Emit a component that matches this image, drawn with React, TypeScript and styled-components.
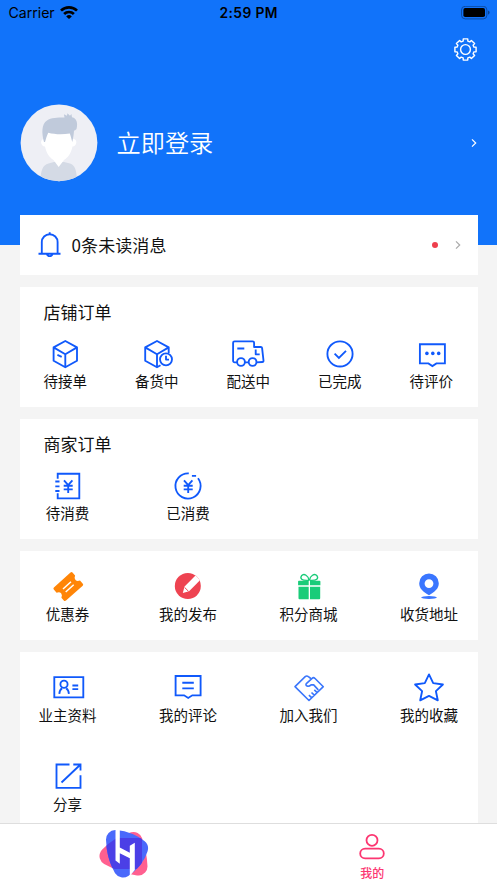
import React from "react";
import styled, { createGlobalStyle } from "styled-components";

const Global = createGlobalStyle`
  * { box-sizing: border-box; }
  html, body { margin: 0; padding: 0; }
  body { background: #f4f4f4; font-family: "Noto Sans CJK SC", sans-serif; color: #111; overflow: hidden; }
`;

const Screen = styled.div`
  width: 497px;
  height: 883px;
  display: flex;
  flex-direction: column;
  overflow: hidden;
  background: #f4f4f4;
`;

const Header = styled.header`
  flex: none;
  height: 245px;
  background: #1173fa;
`;

const StatusBar = styled.div`
  display: grid;
  grid-template-columns: 1fr auto 1fr;
  align-items: center;
  height: 26px;
  padding: 0 7px 0 8.5px;
  font-family: Inter, sans-serif;
  color: #000;
`;

const Carrier = styled.div`
  display: flex;
  align-items: center;
  gap: 5px;
  font-size: 14.2px;
  letter-spacing: -0.05px;
  line-height: 16px;
  padding-bottom: 1px;
`;

const Clock = styled.div`
  font-size: 13.8px;
  font-weight: 600;
  letter-spacing: 0.4px;
  padding-right: 1px;
`;

const BatterySlot = styled.div`
  display: flex;
  justify-content: flex-end;
`;

const Toolbar = styled.div`
  display: flex;
  justify-content: flex-end;
  height: 48px;
  padding: 11px 19px 0 0;
`;

const Profile = styled.div`
  display: flex;
  align-items: center;
  height: 78px;
  margin-top: 30px;
  padding: 0 19px 0 20px;
`;

const LoginText = styled.div`
  flex: 1;
  margin-left: 18.5px;
  padding-bottom: 2px;
  color: #fff;
  font-size: 24.2px;
  font-weight: 350;
  line-height: 36px;
`;

const Content = styled.main`
  flex: 1;
  min-height: 0;
  display: flex;
  flex-direction: column;
  gap: 12px;
  margin-top: -30px;
  padding: 0 19.5px;
  overflow: hidden;
`;

const Card = styled.section<{ $height: number }>`
  flex: none;
  height: ${(p) => p.$height}px;
  background: #fff;
`;

const MessageRow = styled(Card)`
  display: flex;
  align-items: center;
  padding: 0 15.5px 0 14px;
`;

const MessageText = styled.div`
  flex: 1;
  margin-left: 6px;
  padding-bottom: 1px;
  font-size: 17px;
  letter-spacing: 0.1px;
  line-height: 24px;
`;

const UnreadDot = styled.span`
  width: 6px;
  height: 6px;
  margin-right: 16px;
  border-radius: 50%;
  background: #ee3f4d;
`;

const CardTitle = styled.h2`
  height: 51px;
  margin: 0;
  padding: 12px 0 0 24px;
  font-size: 17px;
  font-weight: 400;
  line-height: 26px;
`;

const Entry = styled.div`
  display: flex;
  flex-direction: column;
  align-items: center;
  gap: 1px;
`;

const Grid = styled.div<{ $five?: boolean; $untitled?: boolean }>`
  display: grid;
  grid-template-columns: ${(p) => (p.$five ? "repeat(5, 1fr)" : "repeat(4, 96px)")};
  justify-content: space-between;
  row-gap: 35px;
  margin-right: 0.5px;
  padding-top: ${(p) => (p.$untitled ? 19 : 0)}px;

  ${Entry} {
    gap: ${(p) => (p.$untitled ? 2 : 1)}px;
  }
`;

const Label = styled.span`
  font-size: 14.5px;
  line-height: 20px;
  white-space: nowrap;
`;

const LineIcon = styled.svg<{ $tone?: string }>`
  display: block;
  flex: none;
  width: 32px;
  height: 32px;
  overflow: visible;
  fill: none;
  stroke: ${(p) => p.$tone ?? "#1059fb"};
  stroke-width: 1.85;
`;

const SolidIcon = styled.svg`
  display: block;
  flex: none;
  width: 32px;
  height: 32px;
  overflow: visible;
`;

const Plain = styled.svg`
  display: block;
  flex: none;
`;

const TabBar = styled.nav`
  flex: none;
  height: 60px;
  display: grid;
  grid-template-columns: 1fr 1fr;
  background: #fff;
  border-top: 1px solid #dedede;
`;

const Tab = styled.div<{ $pad: number; $inset?: number }>`
  display: flex;
  flex-direction: column;
  align-items: center;
  padding-top: ${(p) => p.$pad}px;
  padding-right: ${(p) => p.$inset ?? 0}px;
`;

const TabLabel = styled.span`
  margin-top: 4px;
  color: #fc3671;
  font-size: 12px;
  font-weight: 500;
  line-height: 16px;
`;

const Wifi = () => (
  <Plain width="18" height="14" viewBox="0 0 18 14" fill="none" stroke="#000" strokeWidth="2.7">
    <path d="M1 4.6a11.5 11.5 0 0 1 16 0M4.1 8a7 7 0 0 1 9.800 0" />
    <path d="M9 13.100 6.200 10.400a4.100 4.100 0 0 1 5.600 0Z" fill="#000" stroke="none" />
  </Plain>
);

const Battery = () => (
  <Plain width="29" height="14" viewBox="0 0 29 14">
    <rect x=".5" y=".3" width="25.400" height="12.600" rx="3.700" fill="none" stroke="#0b4ba3" />
    <rect x="2.400" y="2.100" width="21.600" height="9" rx="1.800" />
    <path d="M27.200 4.500c1.800.7 1.800 3.500 0 4.200Z" fill="#083a80" />
  </Plain>
);

const gearPoints = Array.from({ length: 8 }, (_, i) => {
  const base = (i * Math.PI) / 4;
  return [
    [-0.27, 8.4],
    [-0.21, 10.4],
    [0.21, 10.4],
    [0.27, 8.4],
  ]
    .map(([a, r]) => `${(12 + r * Math.sin(base + a)).toFixed(2)},${(12 - r * Math.cos(base + a)).toFixed(2)}`)
    .join(" ");
}).join(" ");

const Gear = () => (
  <Plain width="25" height="25" viewBox="0 0 24 24" fill="none" stroke="#fff" strokeWidth="1.350" strokeLinejoin="round">
    <polygon points={gearPoints} />
    <circle cx="12" cy="12" r="4.700" />
  </Plain>
);

const Chevron = ({ color }: { color: string }) => (
  <Plain width="8" height="10" viewBox="0 0 8 10" fill="none" stroke={color} strokeWidth="1.200">
    <path d="m2 1.300 3.700 3.700L2 8.700" />
  </Plain>
);

const Avatar = () => (
  <Plain width="78" height="78" viewBox="0 0 78 78">
    <defs>
      <clipPath id="face">
        <circle cx="39" cy="38.800" r="38.400" />
      </clipPath>
    </defs>
    <g clipPath="url(#face)">
      <rect width="78" height="78" fill="#eeeff5" />
      <path d="M20.500 78c0-11 2-17 8-18.500L34 58h10l6 1.500c5 1.500 7 7.500 7 18.500Z" fill="#d4dae5" />
      <path d="M25.500 35c-6-1-5.500 7-.5 7.500 1.500 7 4.500 11 8.500 13.500l5.200 7 5.300-7c4-2.500 7-6.500 8.500-13.500 5-.5 5.500-8.500-.5-7.500l-2-10H27.500Z" fill="#fff" />
      <path d="M24 38C21.500 29 21.500 20 27 16.500c4-3 10-3 17.500-3l-.6-3.300 3 1.600.6-2.600 2.500 2.600 1.400-1.800.6 3.300c5 .7 6 6.700 4.500 11.700-1 1-2.200 1.500-2.500 2-.3 4-1 8-1.700 11-1-3-1.500-6-2.500-8.500-7 1-15 1-21.500-.8-1.500 3-2.300 6-3.300 9.300Z" fill="#c0cadb" />
    </g>
  </Plain>
);

const Bell = () => (
  <LineIcon viewBox="0 0 32 32">
    <path d="M7.800 24.600V13.100a7.900 7.900 0 0 1 15.800 0v11.500M4.500 24.700h22M15.700 5V3.200M12.900 25a2.900 2.900 0 0 0 5.600 0" />
  </LineIcon>
);

const Box = () => (
  <LineIcon viewBox="0 0 32 32" strokeLinejoin="round">
    <path d="M16.300 3 28 9.400v13.300l-11.700 6.600-11.700-6.600V9.400ZM4.600 9.400l11.700 6.900L28 9.400M16.300 16.300v13M8.400 16.900l4.300 1.900" />
  </LineIcon>
);

const BoxClock = () => (
  <LineIcon viewBox="0 0 32 32" strokeLinejoin="round">
    <path d="M27.700 15V9.400L16 3 4.200 9.400v13.300L16 29.300l3.500-2M4.200 9.400 16 16.300l11.700-6.900M16 16.300v13" />
    <circle cx="25" cy="21.300" r="6" />
    <path d="M25 17.800v3.800h3" />
  </LineIcon>
);

const Truck = () => (
  <LineIcon viewBox="0 0 32 32" strokeLinejoin="round">
    <path d="M5 24.300H2.600a1.500 1.500 0 0 1-1.500-1.500V4.800A1.500 1.500 0 0 1 2.600 3.300h18a1.500 1.500 0 0 1 1.500 1.500V9h6.700c.8 0 1.200.5 1.300 1.200L31.500 22.500c.1.900-.3 1.500-1.200 1.500l-5.800.3M12.900 24.300h3.700M5.300 10.500h7M23.700 11.600v4.700h4" />
    <circle cx="9" cy="24" r="3.900" />
    <circle cx="20.600" cy="24" r="3.900" />
  </LineIcon>
);

const Done = () => (
  <LineIcon viewBox="0 0 32 32">
    <circle cx="16" cy="15.900" r="12.600" />
    <path d="m10.600 15.700 4.300 4.200 7.100-7" />
  </LineIcon>
);

const Rate = () => (
  <LineIcon viewBox="0 0 32 32">
    <path d="M4.900 6.200h25v19.200h-8.500l-4 2.700-4-2.700H4.900Z" />
    <g fill="#1059fb" stroke="none">
      <circle cx="11.900" cy="15.400" r="1.800" />
      <circle cx="17.800" cy="15.400" r="1.800" />
      <circle cx="23.700" cy="15.400" r="1.800" />
    </g>
  </LineIcon>
);

const yen = "M12 10.300l4.200 4.900 4.200-4.900M16.200 15.200v7.700M11.700 15.700h9M11.700 19.400h9";

const Pending = () => (
  <LineIcon viewBox="0 0 32 32">
    <path d="M5.700 8.700v-5h21.600v24.600H5.700v-5M3.300 11.500h4.200M3.300 16.300h4.200M3.300 21h4.200" />
    <path d={yen} />
  </LineIcon>
);

const Consumed = () => (
  <LineIcon viewBox="0 0 32 32">
    <path d="M16.800 3.400A12.600 12.600 0 1 0 26 8.300M19.900 5.800h4.200" />
    <path d={yen} />
  </LineIcon>
);

const Coupon = () => (
  <SolidIcon viewBox="0 0 32 32">
    <path d="M18.500 2.600q1.200-1 2.200.1l2.400 2.700q-1.300 3 .4 4.700 1.600 1.600 4.500.5l2.800 3.100q.9 1-.1 2L14 30.600q-1.200 1-2.200-.1l-2.400-2.700q1.200-3-.3-4.600-1.600-1.700-4.500-.5l-2.800-3.200q-.9-1 .1-2Z" fill="#ff8507" />
    <path d="m11 19 8-7.300M13.700 22l8-7.300" stroke="#fff" strokeWidth="1.500" />
  </SolidIcon>
);

const Publish = () => (
  <SolidIcon viewBox="0 0 32 32">
    <defs>
      <clipPath id="disc">
        <circle cx="15.800" cy="16" r="13" />
      </clipPath>
    </defs>
    <g clipPath="url(#disc)">
      <rect width="32" height="32" fill="#ee4351" />
      <path d="M10.800 23.100 12.600 16.500 24.500 4.600l4.600 4.600-12 12Z" fill="#fff" />
      <path d="m12.700 17.500 3.800 3.800" stroke="#ee4351" strokeWidth="1" />
    </g>
  </SolidIcon>
);

const Gift = () => (
  <SolidIcon viewBox="0 0 32 32" fill="#19cc79">
    <path d="M5.800 10.800h9.900v4.500H5.100v-3.800q0-.7.700-.7M17 10.800h9.600q.8 0 .8.700v3.800H17ZM5.500 16.700h10.200v12.500H6.500q-1 0-1-1ZM17 16.700h10.200v11.500q0 1-1 1H17Z" />
    <g fill="none" stroke="#19cc79" strokeWidth="1.350">
      <path d="M16 10.300C8 11 7 8 8.500 5.800c2.500-3 7 0 7.500 4.500M16.500 10.300c8 .7 9-2.300 7.500-4.500-2.500-3-7 0-7.500 4.500" />
    </g>
  </SolidIcon>
);

const Address = () => (
  <SolidIcon viewBox="0 0 32 32" fill="#3a76ff">
    <path fillRule="evenodd" d="M16 25.200C10.500 21.700 6.200 19 6.200 13.200a9.800 9.800 0 0 1 19.600 0c0 5.800-4.300 8.500-9.800 12ZM16 18a4.400 4.400 0 1 0 0-8.800A4.400 4.400 0 0 0 16 18" />
    <ellipse cx="16" cy="27.500" rx="7.800" ry="1.400" />
  </SolidIcon>
);

const Owner = () => (
  <LineIcon viewBox="0 0 32 32">
    <path d="M2.300 6.100h29v20.200h-29ZM7.300 22.900c.2-3 1-4.400 2.700-5.500M16.900 22.900c-.2-3-1-4.400-2.700-5.500M20.400 14.500h5.800M20.400 18.100h5.800" />
    <circle cx="12" cy="13.200" r="3.600" />
  </LineIcon>
);

const Comments = () => (
  <LineIcon viewBox="0 0 32 32">
    <path d="M3.600 5h25v19.300h-8.300L16.200 27l-4.100-2.700H3.600ZM10.300 11.700h11.500M10.300 17.400h11.500" />
  </LineIcon>
);

const Join = () => (
  <LineIcon viewBox="0 0 32 32" $tone="#3a76fb" strokeLinejoin="round">
    <path d="m17.800 7.500-2.400-1.800q-1.700-1.400-3.200 0L2 15.600 16 29.500l14.300-13.800-8.500-8.400q-1.300-1.200-2.700 0l-5.500 5q-1.500 1.500.5 2.800 2 .7 4-1.200h2.600l4.600 5M15.900 24.200l2.700 2.500M18.500 21.500l2.800 2.700M21.300 18.900l2.600 2.500" strokeWidth="1.600" />
  </LineIcon>
);

const Favorite = () => (
  <LineIcon viewBox="0 0 32 32" strokeLinejoin="round">
    <path d="m16 3.400 4.200 8.700 9.700 1.400-7 6.700 1.900 9.100L16 24.900l-8.800 4.400 1.900-9.100-7-6.700 9.700-1.400Z" />
  </LineIcon>
);

const Share = () => (
  <LineIcon viewBox="0 0 32 32">
    <path d="M17.500 4.500H4.500v23.300h24V15.200M21.300 4.500h7.200v6M28.500 4.500 9.500 22.500" />
  </LineIcon>
);

const blueLobes = "M17.500 10.500Q31 12 40.500 19.500 37 31 25 39 18 27 17.500 10.500Z";
const pinkLobes = "M10.500 27Q21 16 35.500 12 40 25 40.500 37.500 25 35 10.500 27Z";

const Logo = () => (
  <Plain width="52" height="50" viewBox="0 0 52 50" strokeLinejoin="round">
    <defs>
      <mask id="petal">
        <path d={blueLobes} fill="#fff" stroke="#fff" strokeWidth="19" />
      </mask>
    </defs>
    <path d={pinkLobes} fill="#ff6090" stroke="#ff6090" strokeWidth="18" />
    <path d={blueLobes} fill="#4a69fb" stroke="#4a69fb" strokeWidth="19" />
    <path d={pinkLobes} fill="#4b3fe6" stroke="#4b3fe6" strokeWidth="18" mask="url(#petal)" />
    <path d="M17.500 0h4.300v18.500l10 5.200v-7l5-3V41L31.800 47V29.300l-10-5v10.500l-4.300-3.300Z" fill="#fff" />
  </Plain>
);

const Person = () => (
  <Plain width="26" height="28" viewBox="0 0 26 28" fill="none" stroke="#fc3671" strokeWidth="1.800">
    <circle cx="13" cy="7.300" r="5.500" />
    <rect x="1.200" y="15.600" width="23.600" height="9.800" rx="4.900" />
  </Plain>
);

type Item = [string, React.ComponentType];

const shopOrders: Item[] = [
  ["待接单", Box],
  ["备货中", BoxClock],
  ["配送中", Truck],
  ["已完成", Done],
  ["待评价", Rate],
];
const merchantOrders: Item[] = [
  ["待消费", Pending],
  ["已消费", Consumed],
];
const services: Item[] = [
  ["优惠券", Coupon],
  ["我的发布", Publish],
  ["积分商城", Gift],
  ["收货地址", Address],
];
const tools: Item[] = [
  ["业主资料", Owner],
  ["我的评论", Comments],
  ["加入我们", Join],
  ["我的收藏", Favorite],
  ["分享", Share],
];

const Entries = ({ items }: { items: Item[] }) => (
  <>
    {items.map(([label, Icon]) => (
      <Entry key={label}>
        <Icon />
        <Label>{label}</Label>
      </Entry>
    ))}
  </>
);

export default function App() {
  return (
    <Screen>
      <Global />
      <Header>
        <StatusBar>
          <Carrier>
            Carrier
            <Wifi />
          </Carrier>
          <Clock>2:59 PM</Clock>
          <BatterySlot>
            <Battery />
          </BatterySlot>
        </StatusBar>
        <Toolbar>
          <Gear />
        </Toolbar>
        <Profile>
          <Avatar />
          <LoginText>立即登录</LoginText>
          <Chevron color="#fff" />
        </Profile>
      </Header>
      <Content>
        <MessageRow $height={60}>
          <Bell />
          <MessageText>0条未读消息</MessageText>
          <UnreadDot />
          <Chevron color="#aaa" />
        </MessageRow>
        <Card $height={120}>
          <CardTitle>店铺订单</CardTitle>
          <Grid $five>
            <Entries items={shopOrders} />
          </Grid>
        </Card>
        <Card $height={120}>
          <CardTitle>商家订单</CardTitle>
          <Grid>
            <Entries items={merchantOrders} />
          </Grid>
        </Card>
        <Card $height={89}>
          <Grid $untitled>
            <Entries items={services} />
          </Grid>
        </Card>
        <Card $height={190}>
          <Grid $untitled>
            <Entries items={tools} />
          </Grid>
        </Card>
      </Content>
      <TabBar>
        <Tab $pad={5}>
          <Logo />
        </Tab>
        <Tab $pad={9} $inset={1}>
          <Person />
          <TabLabel>我的</TabLabel>
        </Tab>
      </TabBar>
    </Screen>
  );
}
